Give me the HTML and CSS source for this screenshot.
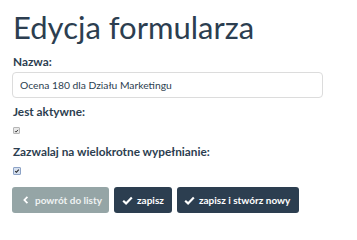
FILE: index.html
```html
<!DOCTYPE html>
<html lang="pl">
<head>
<meta charset="utf-8">
<title>Edycja formularza</title>
<link rel="stylesheet" href="styles.css">
</head>
<body>
<div class="page">
  <h1 class="title">Edycja formularza</h1>
  <form class="form">
    <div class="group group-name">
      <label class="label" for="name">Nazwa:</label>
      <input class="input" id="name" type="text" value="Ocena 180 dla Działu Marketingu">
    </div>
    <div class="group group-active">
      <label class="label">Jest aktywne:</label>
      <span class="check"><svg viewBox="0 0 8 8" width="8" height="8"><path d="M1.6 4.2 L3.2 5.8 L6.4 2.2" fill="none" stroke="#222" stroke-width="1.4"/></svg></span>
    </div>
    <div class="group group-multi">
      <label class="label">Zazwalaj na wielokrotne wypełnianie:</label>
      <span class="check check-focus"><svg viewBox="0 0 8 8" width="8" height="8"><path d="M1.6 4.2 L3.2 5.8 L6.4 2.2" fill="none" stroke="#222" stroke-width="1.4"/></svg></span>
    </div>
    <div class="actions">
      <button type="button" class="btn btn-gray"><svg class="ico" viewBox="0 0 10 10" width="8" height="8"><path d="M6.8 1.2 L3 5 L6.8 8.8" fill="none" stroke="#fff" stroke-width="2.2"/></svg>powrót do listy</button>
      <button type="button" class="btn btn-dark"><svg class="ico" viewBox="0 0 12 10" width="11" height="9"><path d="M1.2 5.2 L4.4 8.2 L10.8 1.6" fill="none" stroke="#fff" stroke-width="2.4"/></svg>zapisz</button>
      <button type="button" class="btn btn-dark btn-wide"><svg class="ico" viewBox="0 0 12 10" width="11" height="9"><path d="M1.2 5.2 L4.4 8.2 L10.8 1.6" fill="none" stroke="#fff" stroke-width="2.4"/></svg>zapisz i stwórz nowy</button>
    </div>
  </form>
</div>
</body>
</html>
```
FILE: styles.css
```css
html, body {
  margin: 0;
  padding: 0;
  background: #fff;
}
body {
  font-family: Lato, "Open Sans", sans-serif;
  color: #2c3e50;
}
.page {
  padding: 10px 34px 0 12px;
}
.title {
  margin: 0 0 0 1px;
  font-size: 31px;
  font-weight: 400;
  line-height: 35px;
  color: #2c3e50;
}
.form {
  display: flex;
  flex-direction: column;
}
.group {
  display: flex;
  flex-direction: column;
  align-items: flex-start;
}
.label {
  font-size: 11.8px;
  font-weight: 700;
  line-height: 14px;
  margin: 7px 0 5px 1px;
}
.group-name .label {
  margin: 10px 0 3px 1px;
}
.group-multi .label {
  margin-top: 11px;
}
.input {
  box-sizing: border-box;
  width: 311px;
  height: 26px;
  border: 1px solid #dcdcdc;
  border-radius: 4px;
  padding: 0 7px;
  font-family: Lato, sans-serif;
  font-size: 10.3px;
  color: #2c3e50;
  background: #fff;
  outline: none;
}
.check {
  box-sizing: border-box;
  display: flex;
  align-items: center;
  justify-content: center;
  width: 7px;
  height: 7px;
  margin: 3px 0 0 1px;
  border: 1px solid #b5b5b5;
  border-radius: 1px;
  background: #e8e8e8;
}
.check svg {
  width: 6px;
  height: 6px;
}
.check-focus {
  width: 8px;
  height: 8px;
  border-color: #8da3c6;
  background: #d6e0ef;
}
.actions {
  display: flex;
  gap: 5px;
  margin-top: 12px;
}
.btn {
  display: flex;
  align-items: center;
  gap: 4px;
  height: 26px;
  padding: 0 8px 0 8px;
  border: none;
  border-radius: 3px;
  font-family: Lato, sans-serif;
  font-size: 10px;
  font-weight: 700;
  color: #fff;
}
.btn-gray {
  padding: 0 7px 0 10px;
  gap: 5px;
  background: #95a5a6;
  color: #eef2f2;
}
.btn-wide {
  padding: 0 9px 0 7px;
}
.btn-dark {
  background: #2c3e50;
}
.ico {
  flex: none;
}
```
